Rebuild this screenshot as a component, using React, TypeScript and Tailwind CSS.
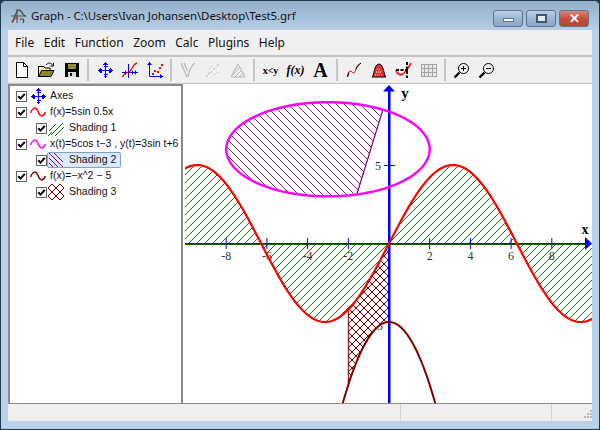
import React from 'react'

// plot scale, in page pixels
const ox = 389
const oy = 243.5
const ux = 20.35
const uy = 15.7
const px = (x: number) => ox + x * ux
const py = (y: number) => oy - y * uy

const trace = (from: number, to: number, fn: (v: number) => [number, number], steps = 120) => {
  const pts: string[] = []
  for (let i = 0; i <= steps; i++) {
    const [x, y] = fn(from + ((to - from) * i) / steps)
    pts.push(`${px(x).toFixed(1)} ${py(y).toFixed(1)}`)
  }
  return pts.join(' L')
}

const sine = (x: number): [number, number] => [x, 5 * Math.sin(0.5 * x)]
const parabola = (x: number): [number, number] => [x, -x * x - 5]
const ellipse = (t: number): [number, number] => [5 * Math.cos(t) - 3, 3 * Math.sin(t) + 6]

const sinePath = 'M' + trace(-10.1, 10, sine, 200)
const sineArea = sinePath + ` L${px(10)} ${oy} L${px(-10.1)} ${oy} Z`
const parabolaPath = 'M' + trace(-2.35, 2.35, parabola)
const ellipsePath = 'M' + trace(0, 6.2832, ellipse) + ' Z'
const chordPath = 'M' + trace(1, 5, ellipse) + ' Z'
const crossPath = 'M' + trace(-2, 0, sine, 40) + ' L' + trace(0, -2, parabola, 40) + ' Z'

const pixels = Array.from({ length: 8 }, (_, i) => i)

const HatchDefs = () => (
  <defs>
    <pattern id="fwd" width="8" height="8" patternUnits="userSpaceOnUse">
      {pixels.map((i) => <rect key={i} x={i} y={7 - i} width="1" height="1" fill="#0c800c" />)}
    </pattern>
    <pattern id="back" width="8" height="8" patternUnits="userSpaceOnUse">
      {pixels.map((i) => <rect key={i} x={i} y={i} width="1" height="1" fill="#8a1a8a" />)}
    </pattern>
    <pattern id="cross" width="8" height="8" patternUnits="userSpaceOnUse">
      {pixels.map((i) => <rect key={i} x={i} y={i} width="1" height="1" fill="#800000" />)}
      {pixels.map((i) => <rect key={'b' + i} x={i} y={7 - i} width="1" height="1" fill="#800000" />)}
    </pattern>
    <clipPath id="plot">
      <rect x="185" y="85" width="407" height="318" />
    </clipPath>
  </defs>
)

const Plot = () => {
  const xTicks = [-8, -6, -4, -2, 2, 4, 6, 8]
  return (
    <svg viewBox="183 84 409 319" className="block w-[409px] h-[319px] bg-white">
      <HatchDefs />
      <g clipPath="url(#plot)">
        <path d={sineArea} fill="url(#fwd)" shapeRendering="crispEdges" />
        <path d={chordPath} fill="url(#back)" shapeRendering="crispEdges" />
        <path d={chordPath} fill="none" stroke="#800080" strokeWidth="1.2" />
        <text x="378" y="330" textAnchor="middle" fontSize="12" fontFamily="'Liberation Serif', serif" fill="#333">-5</text>
        <path d={crossPath} fill="#fff" />
        <path d={crossPath} fill="url(#cross)" shapeRendering="crispEdges" />
        <path d={crossPath} fill="none" stroke="#800000" strokeWidth="1" />
        {xTicks.map((v) => (
          <g key={v}>
            <line x1={px(v)} x2={px(v)} y1="238" y2="249" stroke="#0000ff" strokeWidth="1" />
            <text x={px(v)} y="260" textAnchor="middle" fontSize="12" fontFamily="'Liberation Serif', serif" fill="#333">{v < 0 ? `-${-v}` : v}</text>
          </g>
        ))}
        <text x="378" y="170" textAnchor="middle" fontSize="12" fontFamily="'Liberation Serif', serif" fill="#333">5</text>
        <line x1="384" x2="395" y1="165.5" y2="165.5" stroke="#0000ff" strokeWidth="1" />
        <rect x="185" y="243" width="402" height="1" fill="#0000ff" />
        <rect x="185" y="244" width="400" height="1" fill="#006400" />
        <rect x="388" y="90" width="2.5" height="313" fill="#0000ff" />
        <path d="M389 85 L395 91.5 L383 91.5 Z" fill="#0000ff" />
        <path d="M585 237 L592 243.5 L585 250 Z" fill="#0000ff" />
        <path d={ellipsePath} fill="none" stroke="#ff00ff" strokeWidth="2.4" />
        <path d={sinePath} fill="none" stroke="#ff0000" strokeWidth="2.2" />
        <path d={parabolaPath} fill="none" stroke="#800000" strokeWidth="2" />
        <text x="585" y="234" textAnchor="middle" fontSize="14" fontWeight="bold" fontFamily="'Liberation Serif', serif" fill="#000">x</text>
        <text x="405" y="98" textAnchor="middle" fontSize="15" fontWeight="bold" fontFamily="'Liberation Serif', serif" fill="#000">y</text>
      </g>
    </svg>
  )
}

const Ico = ({ children, w = 16, h = 16 }: { children: React.ReactNode; w?: number; h?: number }) => (
  <svg width={w} height={h} viewBox={`0 0 ${w} ${h}`} className="block shrink-0">{children}</svg>
)

const AxesGlyph = () => (
  <g stroke="#0000ff" fill="#0000ff" strokeWidth="1" shapeRendering="crispEdges">
    <path d="M0.5 8.5H15.5M8.5 1V16M4.5 6.5V10.5M12.5 6.5V10.5M6.5 4.5H10.5M6.5 12.5H10.5" fill="none" />
    <path d="M8.5 0L11 3H6ZM16 8.5L13 6V11ZM1 8.5L4 6V11ZM8.5 16L11 14H6Z" stroke="none" />
  </g>
)

const Wave = ({ color }: { color: string }) => (
  <Ico>
    <path d="M0.5 9 C3 3 6 2.5 8 7.5 S12.5 14 15.5 8" fill="none" stroke={color} strokeWidth="1.5" />
  </Ico>
)

const HatchSwatch = ({ kind }: { kind: 'fwd' | 'back' | 'cross' }) => {
  const green = 'M0 16L4 12M1 11L8 4M3 15L15 3M8 15L15 8M7 16L16 7'
  const purple = 'M1 1L15 15M1 6L10 15M6 1L15 10M1 11L5 15'
  const red = 'M0 4L4 0M0 12L12 0M4 16L16 4M12 16L16 12M0 4L12 16M0 12L4 16M4 0L16 12M12 0L16 4'
  return (
    <Ico>
      <path d={kind === 'fwd' ? green : kind === 'back' ? purple : red} fill="none" strokeWidth="1"
        stroke={kind === 'fwd' ? '#008000' : kind === 'back' ? '#800080' : '#800000'} />
    </Ico>
  )
}

const Check = () => (
  <span className="block w-[11px] h-[11px] bg-white border border-[#666] shrink-0">
    <svg width="9" height="9" viewBox="0 0 9 9" className="block">
      <path d="M1.2 4.2L3.5 6.6L7.8 1.8" fill="none" stroke="#000" strokeWidth="2" />
    </svg>
  </span>
)

const TreeRow = ({ sub, icon, label, active }: { sub?: boolean; icon: React.ReactNode; label: string; active?: boolean }) => (
  <div className={`flex items-center h-4 ${sub ? 'pl-[26px]' : 'pl-[6px]'}`}>
    <Check />
    <div className={`flex items-center h-4 ${sub ? 'w-[74px]' : 'ml-[2px] gap-[4px]'} ${active ? 'bg-[#dbeafb] border border-[#7da2ce] rounded-[2px]' : 'border border-transparent'}`}>
      {icon}
      <span className={`whitespace-nowrap ${sub ? 'ml-[5px]' : ''}`}>{label}</span>
    </div>
  </div>
)

const Tree = () => (
  <div className="w-[175px] h-full bg-white border-t-2 border-l-2 border-r-2 border-[#8a8a8a] pt-[2px] text-[10.5px] text-[#111] font-['Liberation_Sans',sans-serif]">
    <TreeRow icon={<Ico><AxesGlyph /></Ico>} label="Axes" />
    <TreeRow icon={<Wave color="#ff0000" />} label="f(x)=5sin 0.5x" />
    <TreeRow sub icon={<HatchSwatch kind="fwd" />} label="Shading 1" />
    <TreeRow icon={<Wave color="#ff00ff" />} label="x(t)=5cos t−3 , y(t)=3sin t+6" />
    <TreeRow sub active icon={<HatchSwatch kind="back" />} label="Shading 2" />
    <TreeRow icon={<Wave color="#800000" />} label="f(x)=−x^2 − 5" />
    <TreeRow sub icon={<HatchSwatch kind="cross" />} label="Shading 3" />
  </div>
)

const Sep = () => (
  <div className="w-2 flex justify-center">
    <div className="w-[2px] h-[22px] bg-[#c4c4c4]" />
  </div>
)

const Btn = ({ children }: { children: React.ReactNode }) => (
  <div className="w-[25px] h-[22px] flex items-center justify-center">{children}</div>
)

const Magnifier = ({ plus }: { plus?: boolean }) => (
  <Ico w={17} h={17}>
    <circle cx="10.5" cy="6.5" r="5" fill="#f4f4f4" stroke="#000" strokeWidth="1" />
    <path d={plus ? 'M8 6.5H13M10.5 4V9' : 'M8 6.5H13'} stroke="#000" strokeWidth="1" fill="none" />
    <path d="M6.5 10.5L1.5 15.5" stroke="#000" strokeWidth="2.4" />
  </Ico>
)

const Toolbar = () => (
  <div className="h-[27px] flex items-center pl-px border-b border-[#c4c4c4] bg-[#f0f0f0]">
    <Btn>
      <Ico>
        <path d="M2.5 0.5H9.5L13.5 4.5V15.5H2.5Z" fill="#fff" stroke="#000" />
        <path d="M9.5 0.5V4.5H13.5" fill="none" stroke="#000" />
      </Ico>
    </Btn>
    <Btn>
      <Ico w={17} h={16}>
        <path d="M0.5 4.5H6L7 6H12V14.5H0.5Z" fill="#fff27a" stroke="#000" />
        <path d="M0.8 14.5L3.5 8.5H16L13 14.5Z" fill="#8a8a1e" stroke="#000" />
        <path d="M8 3C10 0.5 13 0.5 14.5 3M15.5 1V4H12.5" fill="none" stroke="#000" />
      </Ico>
    </Btn>
    <Btn>
      <Ico>
        <rect x="1" y="1" width="14" height="14" fill="#000" />
        <rect x="4" y="2" width="8" height="5" fill="#8f8f3a" />
        <rect x="4" y="10" width="8" height="5" fill="#d8d8d8" />
        <rect x="6" y="11" width="2" height="3" fill="#000" />
      </Ico>
    </Btn>
    <Sep />
    <Btn><Ico><AxesGlyph /></Ico></Btn>
    <Btn>
      <Ico>
        <path d="M0 10.5H16M6.5 2V16" stroke="#0000ff" fill="none" />
        <path d="M0.5 15C3 9 5 12 8 9S11 2 15 1" stroke="#ff0000" strokeWidth="1.3" fill="none" />
        <path d="M3.5 8.5V12.5M10.5 8.5V12.5M13.5 8.5V12.5" stroke="#0000ff" fill="none" />
      </Ico>
    </Btn>
    <Btn>
      <Ico>
        <path d="M2.5 0V14.5H16" stroke="#0000ff" fill="none" />
        <path d="M0 3L2.5 0L5 3ZM13 12L16 14.5L13 17Z" fill="#0000ff" />
        <path d="M5 11h2v2h-2zM7 8h2v2h-2zM10 9h2v2h-2zM12 5h2v2h-2zM14 2h2v2h-2z" fill="#ff0000" />
      </Ico>
    </Btn>
    <Sep />
    <Btn>
      <Ico>
        <path d="M1 1L7 15M15 1C11 4 9 8 8 15M4 1L7.5 9" stroke="#b4b4b4" fill="none" strokeWidth="1.2" />
      </Ico>
    </Btn>
    <Btn>
      <Ico>
        <path d="M1 15L15 1" stroke="#b4b4b4" strokeWidth="1" strokeDasharray="3 2" fill="none" />
        <path d="M4 6h1v1h-1zM6 4h1v1h-1zM9 12h1v1h-1zM12 10h1v1h-1zM3 11h1v1h-1z" fill="#b4b4b4" />
      </Ico>
    </Btn>
    <Btn>
      <Ico>
        <path d="M1 15L8 2L15 15ZM3 13L10 5M5 15L12 8M9 15L13.5 11M3 10L7 5" stroke="#b4b4b4" fill="none" />
      </Ico>
    </Btn>
    <Sep />
    <Btn><span className="font-['Liberation_Serif',serif] font-bold text-[10px] text-black">x&lt;y</span></Btn>
    <Btn><span className="font-['Liberation_Serif',serif] font-bold italic text-[12px] text-black">f(x)</span></Btn>
    <Btn><span className="font-['Liberation_Serif',serif] font-bold text-[20px] leading-none text-black">A</span></Btn>
    <Sep />
    <Btn>
      <Ico>
        <path d="M1.5 15C2 9 4 8 6 10S9 11 10 7S13 3 15 1" fill="none" stroke="#d00000" strokeWidth="1" />
        <path d="M1.5 15L3 10.5M10 7L12 3.5L15 1" fill="none" stroke="#000" strokeWidth="1" />
      </Ico>
    </Btn>
    <Btn>
      <Ico>
        <path d="M1 15C3 15 3 2 8 2S13 15 15 15Z" fill="#e83030" stroke="#000" strokeWidth="1" />
        <path d="M4 13H12M5 10H11M6 7H10" stroke="#fff" strokeDasharray="1 1" />
      </Ico>
    </Btn>
    <Btn>
      <Ico w={17} h={16}>
        <path d="M1 8C3 15 9 15 16 1" fill="none" stroke="#ff0000" strokeWidth="1.6" />
        <path d="M1 8H13M12 0V16" fill="none" stroke="#000" strokeWidth="2" strokeDasharray="3 1.5" />
      </Ico>
    </Btn>
    <Btn>
      <div className="w-4 h-[13px] bg-[#a4a4a4] grid grid-cols-4 gap-px p-px">
        {Array.from({ length: 12 }, (_, i) => <span key={i} className="bg-[#e8e8e8]" />)}
      </div>
    </Btn>
    <Sep />
    <Btn><Magnifier plus /></Btn>
    <Btn><Magnifier /></Btn>
  </div>
)

const CaptionBtn = ({ close, children }: { close?: boolean; children: React.ReactNode }) => (
  <div className={`w-[30px] h-[17px] flex items-center justify-center rounded-[3px] border border-[#5d7390] ${close ? 'bg-gradient-to-b from-[#d9867a] via-[#c2503f] to-[#b5432f]' : 'bg-gradient-to-b from-[#bdd0e6] via-[#9cb5d2] to-[#8aa7c8]'}`}>
    {children}
  </div>
)

const TitleBar = () => (
  <div className="h-[29px] flex items-center pl-[9px] pr-[10px] bg-gradient-to-b from-[#94aeca] to-[#b6cfe8] font-['Noto_Sans',sans-serif] text-[11.5px] tracking-[-0.1px] text-[#111]">
    <Ico w={18} h={18}>
      <path d="M2 15C5 12 6 3 9 3S13 10 16 9" fill="none" stroke="#3c5b3c" strokeWidth="1.4" />
      <path d="M1 9H16M7 2V16" fill="none" stroke="#50504a" strokeWidth="1" />
      <path d="M2 16C4 12 6 9 8 12" fill="none" stroke="#a03030" strokeWidth="1.2" />
      <path d="M10 13C12 10 15 13 13 16" fill="none" stroke="#405040" strokeWidth="1.2" />
    </Ico>
    <span className="ml-[3px] whitespace-nowrap">Graph - C:\Users\Ivan Johansen\Desktop\Test5.grf</span>
    <div className="ml-auto flex gap-[3px] mt-[5px]">
      <CaptionBtn><span className="block w-[11px] h-[4px] bg-white/90 border border-[#5d7390] mt-[3px]" /></CaptionBtn>
      <CaptionBtn><span className="block w-[11px] h-[9px] border-2 border-[#40566e] bg-white/70" /></CaptionBtn>
      <CaptionBtn close><span className="text-white font-bold text-[13px] leading-none font-['Liberation_Sans',sans-serif]">✕</span></CaptionBtn>
    </div>
  </div>
)

const Menu = () => (
  <div className="h-[27px] flex items-center pl-[7px] gap-[9.5px] border-b-2 border-[#c4c4c4] font-['Noto_Sans',sans-serif] text-[12px] text-[#111]">
    {['File', 'Edit', 'Function', 'Zoom', 'Calc', 'Plugins', 'Help'].map((m) => <span key={m}>{m}</span>)}
  </div>
)

const StatusBar = () => (
  <div className="h-[17px] flex bg-[#f0eeee]">
    <div className="w-[393px] border-r border-[#d4d2d2]" />
    <div className="w-[151px] border-r border-[#d4d2d2]" />
    <div className="flex-1 relative">
      <svg width="10" height="10" viewBox="0 0 10 10" className="absolute right-0 bottom-[2px]">
        <path d="M8 1h2v2H8zM8 4h2v2H8zM8 7h2v2H8zM5 4h2v2H5zM5 7h2v2H5zM2 7h2v2H2z" fill="#b8b8b8" />
      </svg>
    </div>
  </div>
)

const App = () => {
  return (
    <div className="w-[600px] h-[430px] bg-[#1d3a4a]">
      <div className="w-full h-full flex flex-col border border-[#1d3a4a] rounded-t-[6px] bg-[#b9d1ea] overflow-hidden">
        <TitleBar />
        <div className="mx-[7px] h-[391px] flex flex-col bg-[#f0f0f0]">
          <Menu />
          <Toolbar />
          <div className="h-[320px] flex border-b border-[#8a8a8a]">
            <Tree />
            <Plot />
          </div>
          <StatusBar />
        </div>
      </div>
    </div>
  )
}

export default App
